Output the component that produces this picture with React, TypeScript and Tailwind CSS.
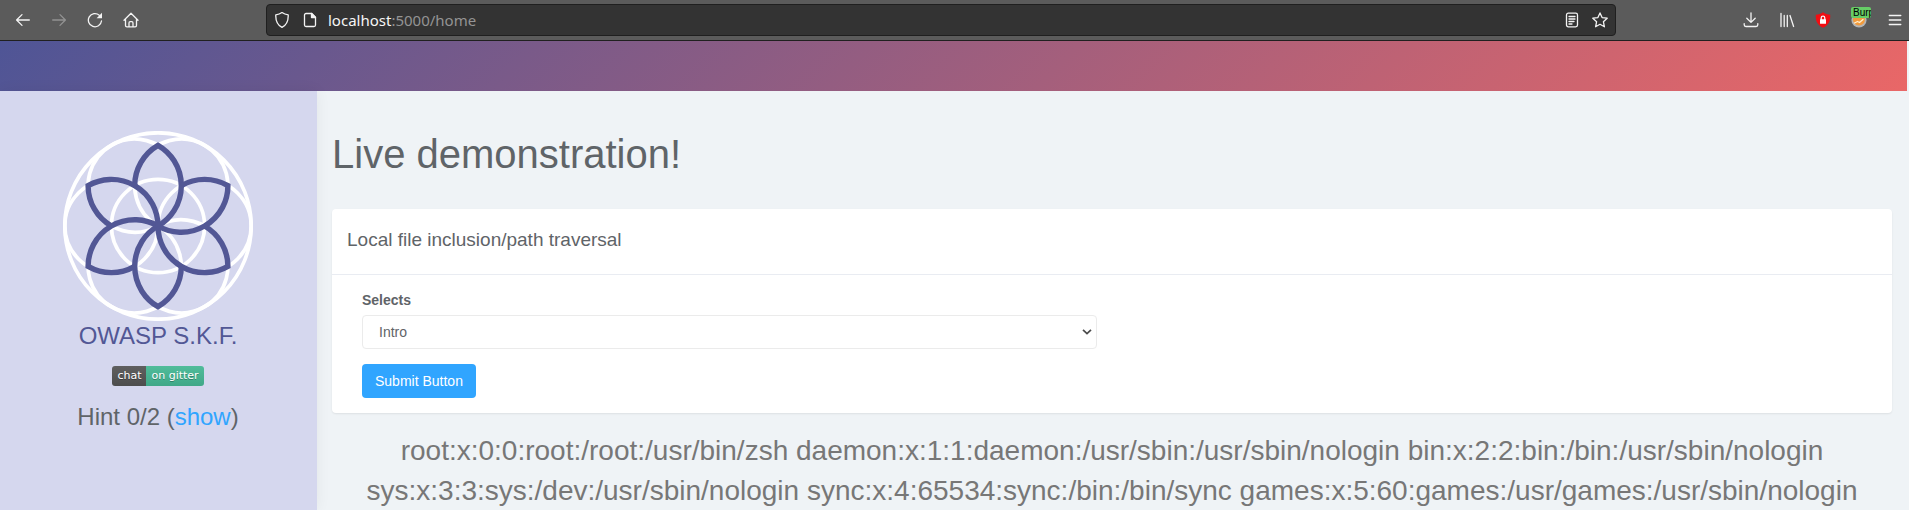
import React from "react";

const PETAL_ANGLES = [0, 60, 120, 180, 240, 300];

const OUTPUT =
  "root:x:0:0:root:/root:/usr/bin/zsh daemon:x:1:1:daemon:/usr/sbin:/usr/sbin/nologin bin:x:2:2:bin:/bin:/usr/sbin/nologin sys:x:3:3:sys:/dev:/usr/sbin/nologin sync:x:4:65534:sync:/bin:/bin/sync games:x:5:60:games:/usr/games:/usr/sbin/nologin";

function Icon({ children, className = "" }: { children: React.ReactNode; className?: string }) {
  return (
    <svg
      viewBox="0 0 16 16"
      className={`size-4 shrink-0 ${className}`}
      fill="none"
      stroke="currentColor"
      strokeWidth="1.3"
      strokeLinecap="round"
      strokeLinejoin="round"
      aria-hidden="true"
    >
      {children}
    </svg>
  );
}

function Toolbar() {
  return (
    <div className="flex h-[41px] items-center border-b border-[#202020] bg-[#5b5b5b] pr-1.5 pl-[15px] text-[#f4f4f4]">
      <div className="flex w-[251px] shrink-0 items-center gap-5">
        <button aria-label="Back">
          <Icon>
            <path d="M14.3 8H1.8M7 2.6 1.6 8 7 13.4" />
          </Icon>
        </button>
        <button aria-label="Forward" className="text-[#929292]">
          <Icon>
            <path d="M1.7 8h12.5M9 2.6 14.4 8 9 13.4" />
          </Icon>
        </button>
        <button aria-label="Reload">
          <Icon>
            <path d="M14.5 9A6.600 6.600 0 1 1 12.300 3.200" />
            <path d="M15 .8v5.400H9.600z" fill="currentColor" stroke="none" />
          </Icon>
        </button>
        <button aria-label="Home">
          <Icon>
            <path d="M1 8.200 8 1.200l7 7M2.500 7v6.400c0 .8.600 1.400 1.400 1.400h8.200c.8 0 1.400-.6 1.400-1.400V7M6 14.600v-3.700c0-.8.5-1.300 1.200-1.300h1.600c.7 0 1.200.5 1.200 1.300v3.700" />
          </Icon>
        </button>
      </div>
      <div className="flex h-8 w-[1350px] min-w-0 shrink items-center rounded border border-[#1f1f1f] bg-[#333333] px-[7px]">
        <Icon>
          <path d="M8 .5c1.800 1.300 3.800 2 6.200 2.300.3 5.800-1 9.800-6.200 12.600C2.800 12.600 1.500 8.600 1.800 2.800 4.200 2.500 6.200 1.800 8 .5z" />
        </Icon>
        <Icon className="ml-3">
          <path d="M9.800 1.500H4A1.500 1.500 0 0 0 2.500 3v10A1.500 1.500 0 0 0 4 14.500h8a1.500 1.500 0 0 0 1.500-1.500V5.200z" />
          <path d="M9.500 1.500v4h4z" fill="currentColor" />
        </Icon>
        <label htmlFor="url" className="ml-2.5 cursor-text font-['Noto_Sans',sans-serif] text-[15px] text-[#949494]">
          <span className="text-[#f6f6f6]">localhost</span>:5000/home
        </label>
        <input id="url" className="min-w-0 flex-1 bg-transparent outline-none" />
        <button aria-label="Reader view">
          <Icon>
            <rect x="2.500" y="1.200" width="11" height="13.600" rx="1.800" />
            <path d="M5 4.500h6M5 7h6M5 9.500h5M5 12h3" />
          </Icon>
        </button>
        <button aria-label="Bookmark" className="ml-3">
          <Icon>
            <path d="m8 .9 2.100 4.700 5.100.6-3.800 3.500 1 5.100L8 12.300l-4.400 2.500 1-5.100L.8 6.200l5.100-.6z" />
          </Icon>
        </button>
      </div>
      <div className="ml-auto flex shrink-0 items-center gap-5">
        <button aria-label="Downloads">
          <Icon>
            <path d="M8 .8v9.400M3.800 6.200 8 10.400l4.200-4.200M1.200 11.600v1.200c0 1 .7 1.700 1.700 1.700h10.200c1 0 1.700-.7 1.700-1.700v-1.200" />
          </Icon>
        </button>
        <button aria-label="Library">
          <Icon>
            <path d="M2 1.500v13M5.200 3.500v11M8.300 3.500v11M11 3.500l3.600 11" />
          </Icon>
        </button>
        <button aria-label="Site protection">
          <Icon>
            <path d="M8 .3c2 1.400 4.500 2.300 7.200 2.400.4 6.300-1.500 10.300-7.200 13-5.700-2.700-7.600-6.700-7.200-13C3.500 2.600 6 1.700 8 .3z" fill="#f20d12" stroke="none" />
            <path d="M6.200 7.500V6a1.800 1.800 0 0 1 3.600 0v1.500" />
            <rect x="5" y="7.300" width="6" height="4.500" rx=".5" fill="#fff" stroke="none" />
          </Icon>
        </button>
        <button aria-label="Proxy" className="relative">
          <Icon>
            <circle cx="8" cy="8" r="7.600" fill="#b4b4b4" stroke="none" />
            <circle cx="8" cy="7.500" r="6" fill="#f29a3c" stroke="none" />
            <path d="m3.500 11 3-1.500 2 1 3.500-3" stroke="#fff0d0" />
          </Icon>
          <span className="absolute -top-[5px] left-0 w-5 overflow-hidden rounded-xs bg-[#66cc66] pl-0.5 text-left text-[10px] leading-[11px] text-black">
            Burp
          </span>
        </button>
        <button aria-label="Menu">
          <Icon>
            <path d="M2.300 3.500h11.500M2.300 8h11.500M2.300 12.500h11.500" />
          </Icon>
        </button>
      </div>
    </div>
  );
}

function Logo() {
  return (
    <svg viewBox="-95 -95 190 190" className="size-[190px]" fill="none" role="img" aria-label="OWASP S.K.F.">
      <g stroke="#fff" strokeWidth="3.700">
        <circle r="93.200" />
        <circle r="46.600" />
        {PETAL_ANGLES.map((a) => (
          <circle key={a} cx="46.600" r="46.600" transform={`rotate(${a})`} />
        ))}
      </g>
      <g stroke="#525795" strokeWidth="5.400">
        {PETAL_ANGLES.map((a) => (
          <path
            key={a}
            d="M-23.300-40.360A46.600 46.600 0 0 1 0-80.710A46.600 46.600 0 0 1 0 0"
            transform={`rotate(${a})`}
          />
        ))}
      </g>
    </svg>
  );
}

function Sidebar() {
  return (
    <aside className="z-10 flex w-[317px] shrink-0 flex-col items-center bg-[#d5d7ee] pt-10 pr-px shadow-[0_0_14px_rgba(0,0,0,0.06)]">
      <Logo />
      <h2 className="text-2xl leading-[30px] text-[#525795]">OWASP S.K.F.</h2>
      <a
        href="#chat"
        className="mt-[15px] flex h-5 overflow-hidden rounded-[3px] font-['DejaVu_Sans',sans-serif] text-[11px] leading-5 text-white [text-shadow:0_1px_0_rgba(1,1,1,0.3)]"
      >
        <span className="bg-linear-to-b from-[#5f5f5f] to-[#4d4d4d] px-[5px]">chat</span>
        <span className="bg-linear-to-b from-[#50bc9a] to-[#40a888] px-[5px]">on gitter</span>
      </a>
      <p className="mt-4 text-2xl leading-[30px]">
        Hint 0/2 (
        <a href="#hint" className="text-[#30a5ff]">
          show
        </a>
        )
      </p>
    </aside>
  );
}

export default function App() {
  return (
    <div className="flex h-screen flex-col overflow-hidden bg-[#eff3f6] font-['Liberation_Sans',Arial,sans-serif] text-[#5f6468]">
      <Toolbar />
      <header className="mr-0.5 h-[50px] shrink-0 bg-[linear-gradient(135deg,#4f5596,#e96767)]" />
      <div className="flex min-h-0 flex-1">
        <Sidebar />
        <main className="min-w-0 flex-1 pr-[17px] pl-[15px]">
          <h1 className="pt-10 text-[40px] leading-[46px]">Live demonstration!</h1>
          <section className="mt-8 rounded bg-white shadow-[0_1px_2px_rgba(0,0,0,0.08)]">
            <h2 className="border-b border-[#e9ecf2] px-[15px] pt-[18px] pb-[22px] text-[19px] leading-[25px]">
              Local file inclusion/path traversal
            </h2>
            <form className="px-[30px] pt-[15px] pb-[15px] text-sm" onSubmit={(e) => e.preventDefault()}>
              <label htmlFor="selects" className="block leading-5 font-bold">
                Selects
              </label>
              <div className="relative mt-[5px] w-[735px] max-w-full">
                <select
                  id="selects"
                  className="block h-[34px] w-full appearance-none rounded border border-[#ebebeb] bg-white pr-8 pl-4"
                >
                  <option>Intro</option>
                </select>
                <svg
                  viewBox="0 0 10 6"
                  className="pointer-events-none absolute top-3.5 right-[5px] h-1.5 w-2.5"
                  fill="none"
                  stroke="#4a4a4a"
                  strokeWidth="1.700"
                  aria-hidden="true"
                >
                  <path d="M1 .8 5 4.600 9 .8" />
                </svg>
              </div>
              <button className="mt-[15px] block h-[34px] rounded bg-[#30a5ff] px-[13px] text-white">
                Submit Button
              </button>
            </form>
          </section>
          <p className="mt-[18px] px-[15px] text-center text-[28px] leading-10 text-[#777777]">{OUTPUT}</p>
        </main>
      </div>
    </div>
  );
}
